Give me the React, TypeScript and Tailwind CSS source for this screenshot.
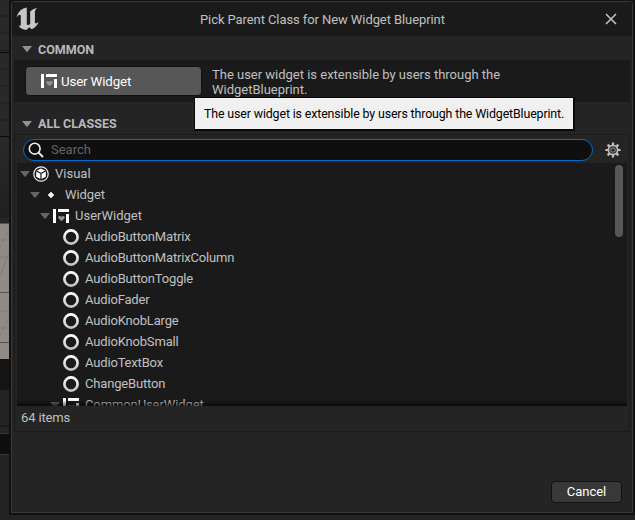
import React from "react";

const items = [
  "AudioButtonMatrix",
  "AudioButtonMatrixColumn",
  "AudioButtonToggle",
  "AudioFader",
  "AudioKnobLarge",
  "AudioKnobSmall",
  "AudioTextBox",
  "ChangeButton",
];

function Arrow({ className = "" }: { className?: string }) {
  return (
    <svg className={`shrink-0 ${className}`} width="10" height="6" viewBox="0 0 10 6" fill="currentColor">
      <path d="M0 0h10L5.6 5.4a.8.8 0 0 1-1.2 0z" />
    </svg>
  );
}

function WidgetIcon() {
  return (
    <svg className="shrink-0" width="16" height="14" viewBox="0 0 16 14">
      <path fill="#fff" d="M0 0h3v14H0zM5 0h11v3H5zM13 5h3v9h-3z" />
      <path fill="#929292" d="M8.500 12.300 5.600 9.500C4.700 8.400 5.500 7 6.700 7c.9 0 1.400.4 1.800 1 .4-.6.900-1 1.800-1 1.200 0 2 1.400 1.100 2.500z" />
    </svg>
  );
}

function Ring() {
  return (
    <svg className="shrink-0" width="16" height="18" viewBox="0 0 16 18">
      <defs>
        <linearGradient id="ring" x1="0" y1="0" x2="0" y2="1">
          <stop offset="0" stopColor="#fff" />
          <stop offset="1" stopColor="#c4c4c4" />
        </linearGradient>
      </defs>
      <circle cx="8" cy="9" r="6.600" fill="none" stroke="url(#ring)" strokeWidth="2.700" />
    </svg>
  );
}

function Logo() {
  return (
    <svg width="24" height="24" viewBox="0 0 24 24" fill="#c6c6c6">
      <path d="M11 .5C5.500 1.300 2 4.700.6 10.200 2.200 8.200 3.200 7.500 4 7.700c.6.1.8.7.8 1.500v8.300c0 1.100-.8 1.500-2.200 1.200 1.700 2.600 4.300 4.100 7.800 4.200l2.800-2.600 2.500 2c3.300-1.500 5.800-4.100 7-7.600-1.300 1.200-2.300 1.700-3 1.500-.6-.1-.8-.5-.8-1.300V5.400c0-1.900.8-3.100 2.300-4.400-3 .6-5.400 1.700-7.400 4 .3.300.4.700.4 1.200v10.500c-.6.800-1.300 1.300-2.100 1.300-.9 0-1.300-.6-1.300-1.600V4.500c0-1.700-.3-2.500.2-4z" />
    </svg>
  );
}

function Cube() {
  return (
    <svg className="shrink-0" width="16" height="16" viewBox="0 0 16 16">
      <circle cx="8" cy="8" r="7.200" fill="none" stroke="#eee" strokeWidth="1.200" />
      <path fill="#fff" d="m8 2.600 4.100 2L8 6.800 3.900 4.600zM3.200 5.600l4.200 2.200v5.300l-4.200-2.400zM12.800 5.600 8.600 7.800v5.300l4.200-2.400z" />
    </svg>
  );
}

function Gear() {
  return (
    <svg className="shrink-0" width="16" height="16" viewBox="0 0 16 16" stroke="#c0c0c0" fill="none">
      <circle cx="8" cy="8" r="4.600" strokeWidth="1.700" />
      <circle cx="8" cy="8" r="2.200" strokeWidth="1.200" stroke="#808080" />
      <path strokeWidth="2.200" d="M8 .4v2.800M8 12.800v2.800M.4 8h2.800M12.800 8h2.800M2.600 2.600l2 2M11.400 11.400l2 2M13.400 2.600l-2 2M4.600 11.400l-2 2" />
    </svg>
  );
}

function Section({ title, className }: { title: string; className: string }) {
  return (
    <div className={`flex shrink-0 items-center gap-[6px] pl-[10px] text-[12.500px] font-bold text-[#b9b9b9] ${className}`}>
      <Arrow className="text-[#929292]" />
      <span className="relative top-px">{title}</span>
    </div>
  );
}

export default function App() {
  return (
    <div className="relative flex h-[520px] w-[635px] overflow-hidden bg-[#1c1c1c] font-[Roboto,sans-serif] text-[13px] text-[#c0c0c0]">
      <div className="flex w-[9px] shrink-0 flex-col">
        <div className="h-[52px] bg-[repeating-linear-gradient(#292929_0px,#292929_15px,#232323_15px,#232323_17px)]" />
        <div className="h-px bg-[#080808]" />
        <div className="h-[83px] bg-[repeating-linear-gradient(#292929_0px,#292929_15px,#232323_15px,#232323_17px)]" />
        <div className="h-px bg-[#080808]" />
        <div className="h-[81px] bg-[linear-gradient(#292929,#202020)]" />
        <div className="h-[5px] bg-[#242529]" />
        <svg width="9" height="136" viewBox="0 0 9 136" className="block shrink-0 bg-[#918b87]">
          <path d="M0 17h9M0 34h9M0 88h9M0 105h9M0 24 9 7M0 54 9 29M0 113 9 94" stroke="#827d79" fill="none" />
          <path d="M0 .5h9M0 69.500h9M0 119.500h9" stroke="#57534f" />
        </svg>
        <div className="h-[31px] bg-[#141414]" />
        <div className="h-[35px] bg-[#242424]" />
        <div className="h-[2px] bg-[#191919]" />
        <div className="h-[6px] bg-[#242424]" />
        <div className="h-px bg-[#353535]" />
        <div className="h-[20px] bg-[#0e0e0e]" />
        <div className="h-px bg-[#353535]" />
        <div className="flex-1 bg-[#242424]" />
      </div>

      <div className="flex min-w-0 flex-1 flex-col bg-[#242424]">
        <div className="flex h-[515px] flex-col border-r-2 border-b-2 border-l-2 border-[#111]">
          <div className="h-px shrink-0 bg-[#111]" />
          <div className="flex min-h-0 flex-1 flex-col rounded-t-sm border border-[#383838] bg-[#242424]">
            <header className="flex h-[34px] shrink-0 items-center bg-[#1a1a1a] pr-[15px] pl-[4px]">
              <Logo />
              <div className="flex-1 pt-[2px] pl-[160px] whitespace-nowrap tracking-[-0.085px]">Pick Parent Class for New Widget Blueprint</div>
              <svg width="12" height="12" viewBox="0 0 12 12" stroke="#c8c8c8" strokeWidth="1.500">
                <path d="m1 1 10 10M11 1 1 11" />
              </svg>
            </header>

            <Section title="COMMON" className="h-[24px] pt-[2px]" />
            <div className="mr-[2px] ml-[2px] flex h-[42px] shrink-0 items-center bg-[#1a1a1a] pl-[11px]">
              <button className="flex h-[30px] w-[177px] items-center gap-[4px] rounded-[4px] border border-[#111] bg-[#575757] pl-[15px] text-[13.300px] tracking-[-0.150px] text-white">
                <WidgetIcon />
                <span className="pt-[2px]">User Widget</span>
              </button>
              <p className="ml-[10px] pt-px leading-[15px] tracking-[-0.010px]">
                The user widget is extensible by users through the
                <br />
                WidgetBlueprint.
              </p>
            </div>

            <Section title="ALL CLASSES" className="h-[32px] pt-[11px]" />
            <section className="mr-[2px] ml-[2px] flex h-[298px] shrink-0 flex-col border border-[#1b1b1b] px-[2px]">
              <div className="flex h-[28px] shrink-0 items-center pt-px pr-[6px] pl-[6px]">
                <div className="flex h-[22px] w-[570px] items-center rounded-full border border-[#0869cd] bg-[#0f0f0f] pl-[4px]">
                  <svg width="16" height="16" viewBox="0 0 16 16" fill="none" stroke="#eee" strokeWidth="1.600">
                    <circle cx="6.700" cy="6.700" r="5.400" />
                    <path d="m10.600 10.600 4.400 4.400" strokeWidth="2" />
                  </svg>
                  <span className="pl-[7px] text-[#646464]">Search</span>
                </div>
                <span className="ml-[12px]">
                  <Gear />
                </span>
              </div>
              <div className="relative flex h-[243px] shrink-0 bg-[#1a1a1a]">
                <div className="flex-1 overflow-hidden pl-[3px]">
                  <div className="flex h-[21px] items-center">
                    <Arrow className="mr-[3px] text-[#656565]" />
                    <Cube />
                    <span className="pl-[6px]">Visual</span>
                  </div>
                  <div className="flex h-[21px] items-center pl-[10px]">
                    <Arrow className="mr-[8px] text-[#656565]" />
                    <svg width="6" height="6" viewBox="0 0 6 6">
                      <path d="m3 0 3 3-3 3-3-3z" fill="#fff" stroke="#fff" strokeWidth=".5" />
                    </svg>
                    <span className="pl-[11px] tracking-[-0.100px]">Widget</span>
                  </div>
                  <div className="flex h-[21px] items-center pl-[20px]">
                    <Arrow className="mr-[3px] text-[#656565]" />
                    <WidgetIcon />
                    <span className="pl-[6px]">UserWidget</span>
                  </div>
                  {items.map((item) => (
                    <div key={item} className="flex h-[21px] items-center pl-[43px]">
                      <Ring />
                      <span className="pl-[6px] tracking-[-0.170px]">{item}</span>
                    </div>
                  ))}
                  <div className="flex h-[21px] items-center pl-[30px]">
                    <Arrow className="mr-[3px] text-[#656565]" />
                    <WidgetIcon />
                    <span className="pl-[6px] tracking-[-0.100px]">CommonUserWidget</span>
                  </div>
                </div>
                <div className="mt-[2px] mr-[4px] h-[72px] w-[8px] rounded-full bg-[#575757]" />
                <div className="absolute inset-x-0 bottom-0 h-[6px] bg-linear-to-t from-black/60 to-transparent" />
              </div>
              <div className="flex flex-1 items-center pb-[2px] pl-[4px] tracking-[-0.150px]">64 items</div>
            </section>

            <footer className="flex flex-1 items-center justify-end pt-[39px] pr-[10px]">
              <button className="h-[22px] w-[71px] rounded-[4px] border border-[#111] bg-[#383838] text-white">Cancel</button>
            </footer>
          </div>
        </div>
      </div>

      <div className="absolute top-[97px] left-[194px] flex h-[34px] w-[381px] items-center border border-r-2 border-b-2 border-[#080808] bg-[#f0f0f0] pt-px pl-[9px] text-[12.400px] tracking-[-0.135px] whitespace-nowrap text-black">
        The user widget is extensible by users through the WidgetBlueprint.
      </div>
    </div>
  );
}
